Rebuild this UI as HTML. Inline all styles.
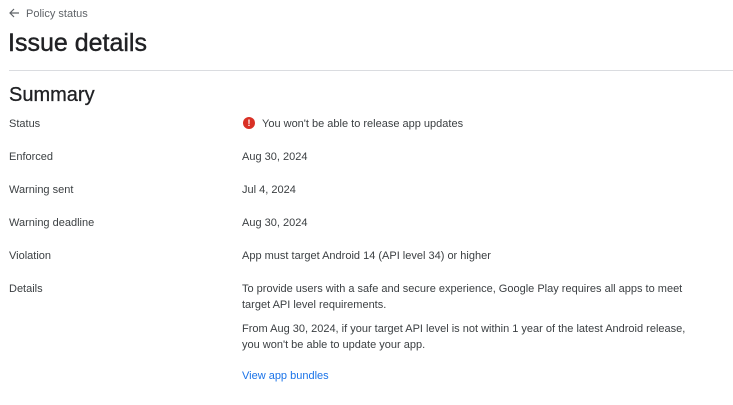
<!DOCTYPE html><html><head><style>
body{margin:0;width:733px;height:405px;background:#fff;font-family:"Liberation Sans",Arial,sans-serif;color:#202124;position:relative;overflow:hidden}
.a{position:absolute;white-space:nowrap}
.s{font-size:11px;color:#3c4043;line-height:15px}
</style></head><body>
<div class="a" style="left:9px;top:7px;font-size:11px;color:#5f6368;line-height:15px">
<svg width="11" height="10" viewBox="0 0 11 10" style="vertical-align:-1px;margin-right:6px"><path d="M10 5H1.5M5 1L1 5l4 4" stroke="#5f6368" stroke-width="1.2" fill="none"/></svg>Policy status</div>
<div class="a" style="left:8px;top:28px;font-size:25px;line-height:30px;color:#202124;-webkit-text-stroke:0.4px #202124">Issue details</div>
<div class="a" style="left:9px;top:70px;width:724px;height:1px;background:#dadce0"></div>
<div class="a" style="left:9px;top:83px;font-size:20px;line-height:24px;-webkit-text-stroke:0.3px #202124">Summary</div>
<div class="a s" style="left:9px;top:117px">Status</div>
<div class="a s" style="left:9px;top:150px">Enforced</div>
<div class="a s" style="left:9px;top:183px">Warning sent</div>
<div class="a s" style="left:9px;top:216px">Warning deadline</div>
<div class="a s" style="left:9px;top:249px">Violation</div>
<div class="a s" style="left:9px;top:282px">Details</div>
<div class="a" style="left:243px;top:117px;width:12px;height:12px;border-radius:50%;background:#d93025;color:#fff;font-size:9px;font-weight:bold;text-align:center;line-height:12px">!</div>
<div class="a s" style="left:262px;top:117px">You won't be able to release app updates</div>
<div class="a s" style="left:242px;top:150px">Aug 30, 2024</div>
<div class="a s" style="left:242px;top:183px">Jul 4, 2024</div>
<div class="a s" style="left:242px;top:216px">Aug 30, 2024</div>
<div class="a s" style="left:242px;top:249px">App must target Android 14 (API level 34) or higher</div>
<div class="a s" style="left:242px;top:281px;line-height:16px">To provide users with a safe and secure experience, Google Play requires all apps to meet<br>target API level requirements.</div>
<div class="a s" style="left:242px;top:321px;line-height:16px">From Aug 30, 2024, if your target API level is not within 1 year of the latest Android release,<br>you won't be able to update your app.</div>
<div class="a s" style="left:242px;top:369px;color:#1a73e8">View app bundles</div>
</body></html>
